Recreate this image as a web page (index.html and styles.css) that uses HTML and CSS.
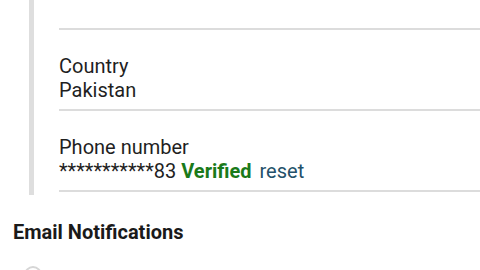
FILE: index.html
```html
<!DOCTYPE html>
<html lang="en">
<head>
  <meta charset="UTF-8" />
  <title>Account settings</title>
  <meta name="viewport" content="width=device-width, initial-scale=1.0" />
  <link rel="stylesheet" href="styles.css">
</head>
<body>
  <!-- Профиль -->
  <div class="details">
    <div class="row row-top"></div>
    <div class="row">
      <div class="label">Country</div>
      <div class="value">Pakistan</div>
    </div>
    <div class="row">
      <div class="label">Phone number</div>
      <div class="value">***********83 <span class="verified">Verified</span><a class="reset" href="#">reset</a></div>
    </div>
  </div>

  <!-- Уведомления -->
  <h2 class="section-title">Email Notifications</h2>
  <div class="option">
    <span class="radio"></span>
  </div>
</body>
</html>
```

FILE: styles.css
```css
* { box-sizing: border-box; margin: 0; padding: 0; }
html, body {
  width: 100%; height: 100%; overflow: hidden;
  background: #fff; font-family: Roboto, 'Noto Sans', sans-serif; color: #1f1f1f;
}

/* Детали */
.details {
  margin-left: 29px; padding-left: 25px; padding-bottom: 3px;
  border-left: 5px solid #dedede;
}
.row {
  padding: 24px 0 7px 0; border-bottom: 2px solid #dcdcdc;
  font-size: 20px; line-height: 24px;
}
.row-top { height: 30px; padding: 0; }
.verified { color: #1a7a1a; font-weight: 700; }
.reset { color: #24516a; text-decoration: none; margin-left: 8px; }

/* Уведомления */
.section-title {
  margin: 25px 0 0 13px; font-size: 20px; line-height: 24px; font-weight: 700; color: #1a1a1a;
}
.option { margin: 22px 0 0 24px; }
.radio {
  display: block; width: 18px; height: 18px;
  border: 2px solid #d6d6d6; border-radius: 50%;
}
```
